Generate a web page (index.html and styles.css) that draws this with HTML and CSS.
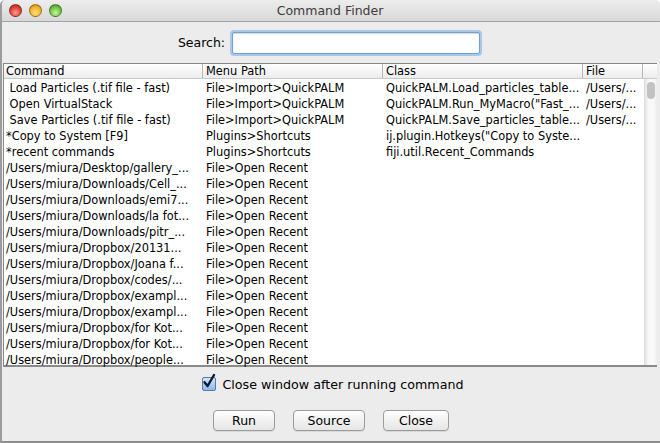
FILE: index.html
```html
<!DOCTYPE html>
<html>
<head>
<meta charset="utf-8">
<title>Command Finder</title>
<link rel="stylesheet" href="styles.css">
</head>
<body>
<div class="window">
  <div class="titlebar">
    <div class="lights">
      <span class="light red"></span>
      <span class="light yellow"></span>
      <span class="light green"></span>
    </div>
    <div class="title">Command Finder</div>
  </div>
  <div class="search-row">
    <span class="search-label">Search:</span>
    <div class="search-input"></div>
  </div>
  <div class="table">
    <div class="thead">
      <div class="th">Command</div>
      <div class="th">Menu Path</div>
      <div class="th">Class</div>
      <div class="th">File</div>
      <div class="th last"></div>
    </div>
    <div class="tbody">
      <div class="rows">
        <div class="row"><div class="td"> Load Particles (.tif file - fast)</div><div class="td">File&gt;Import&gt;QuickPALM</div><div class="td">QuickPALM.Load_particles_table...</div><div class="td">/Users/...</div></div>
        <div class="row"><div class="td"> Open VirtualStack</div><div class="td">File&gt;Import&gt;QuickPALM</div><div class="td">QuickPALM.Run_MyMacro("Fast_...</div><div class="td">/Users/...</div></div>
        <div class="row"><div class="td"> Save Particles (.tif file - fast)</div><div class="td">File&gt;Import&gt;QuickPALM</div><div class="td">QuickPALM.Save_particles_table...</div><div class="td">/Users/...</div></div>
        <div class="row"><div class="td">*Copy to System [F9]</div><div class="td">Plugins&gt;Shortcuts</div><div class="td">ij.plugin.Hotkeys("Copy to Syste...</div><div class="td"></div></div>
        <div class="row"><div class="td">*recent commands</div><div class="td">Plugins&gt;Shortcuts</div><div class="td">fiji.util.Recent_Commands</div><div class="td"></div></div>
        <div class="row"><div class="td">/Users/miura/Desktop/gallery_...</div><div class="td">File&gt;Open Recent</div><div class="td"></div><div class="td"></div></div>
        <div class="row"><div class="td">/Users/miura/Downloads/Cell_...</div><div class="td">File&gt;Open Recent</div><div class="td"></div><div class="td"></div></div>
        <div class="row"><div class="td">/Users/miura/Downloads/emi7...</div><div class="td">File&gt;Open Recent</div><div class="td"></div><div class="td"></div></div>
        <div class="row"><div class="td">/Users/miura/Downloads/la fot...</div><div class="td">File&gt;Open Recent</div><div class="td"></div><div class="td"></div></div>
        <div class="row"><div class="td">/Users/miura/Downloads/pitr_...</div><div class="td">File&gt;Open Recent</div><div class="td"></div><div class="td"></div></div>
        <div class="row"><div class="td">/Users/miura/Dropbox/20131...</div><div class="td">File&gt;Open Recent</div><div class="td"></div><div class="td"></div></div>
        <div class="row"><div class="td">/Users/miura/Dropbox/Joana f...</div><div class="td">File&gt;Open Recent</div><div class="td"></div><div class="td"></div></div>
        <div class="row"><div class="td">/Users/miura/Dropbox/codes/...</div><div class="td">File&gt;Open Recent</div><div class="td"></div><div class="td"></div></div>
        <div class="row"><div class="td">/Users/miura/Dropbox/exampl...</div><div class="td">File&gt;Open Recent</div><div class="td"></div><div class="td"></div></div>
        <div class="row"><div class="td">/Users/miura/Dropbox/exampl...</div><div class="td">File&gt;Open Recent</div><div class="td"></div><div class="td"></div></div>
        <div class="row"><div class="td">/Users/miura/Dropbox/for Kot...</div><div class="td">File&gt;Open Recent</div><div class="td"></div><div class="td"></div></div>
        <div class="row"><div class="td">/Users/miura/Dropbox/for Kot...</div><div class="td">File&gt;Open Recent</div><div class="td"></div><div class="td"></div></div>
        <div class="row"><div class="td">/Users/miura/Dropbox/people...</div><div class="td">File&gt;Open Recent</div><div class="td"></div><div class="td"></div></div>
      </div>
      <div class="scrollbar"><div class="thumb"></div></div>
    </div>
  </div>
  <div class="check-row">
    <span class="checkbox">
      <svg width="16" height="17" viewBox="0 0 16 17"><path d="M3.5 9.2 L6.6 13 L13 2" fill="none" stroke="#0d1a33" stroke-width="2.4" stroke-linecap="round" stroke-linejoin="round"/></svg>
    </span>
    <span class="check-label">Close window after running command</span>
  </div>
  <div class="buttons">
    <div class="btn btn-run">Run</div>
    <div class="btn btn-source">Source</div>
    <div class="btn btn-close">Close</div>
  </div>
</div>
</body>
</html>
```
FILE: styles.css
```css
* { box-sizing: border-box; }
html, body { margin: 0; padding: 0; background: #ffffff; }
body { width: 660px; height: 443px; overflow: hidden; font-family: "DejaVu Sans", sans-serif; color: #000; }

.window {
  width: 660px;
  height: 443px;
  background: #ececec;
  border-left: 2px solid #9c9c9c;
  border-bottom: 2px solid #8e8e8e;
  border-radius: 5px 5px 0 0;
  display: flex;
  flex-direction: column;
  overflow: hidden;
}

.titlebar {
  height: 22px;
  flex: none;
  background: linear-gradient(#ededed, #d8d8d8);
  border-bottom: 1px solid #a3a3a3;
  position: relative;
  display: flex;
  align-items: center;
  justify-content: center;
}
.lights { position: absolute; left: 7px; top: 4px; display: flex; gap: 7px; }
.light { width: 13px; height: 13px; border-radius: 50%; border: 1px solid rgba(0,0,0,0.35); }
.red { background: radial-gradient(circle at 50% 70%, #ff9a8e 0%, #e0443a 55%, #b31f17 100%); }
.yellow { background: radial-gradient(circle at 50% 70%, #ffe08a 0%, #f2b42a 55%, #c6800c 100%); }
.green { background: radial-gradient(circle at 50% 70%, #c8f59a 0%, #6fc548 55%, #3d9220 100%); }
.title { font-size: 12.5px; color: #3c3c3c; margin-left: -2px; }

.search-row {
  height: 41px;
  flex: none;
  display: flex;
  align-items: center;
  justify-content: center;
  gap: 7px;
  padding-right: 4px;
}
.search-label { font-size: 12.5px; }
.search-input {
  width: 248px;
  height: 22px;
  background: #fff;
  border: 1px solid #6f9fd6;
  border-radius: 2px;
  box-shadow: 0 0 0 2px #a9c7ea, inset 0 1px 1px rgba(0,0,0,0.15);
}

.table {
  flex: none;
  height: 304px;
  margin-left: 1px;
  margin-right: 3px;
  background: #fff;
  border-top: 1px solid #888;
  border-left: 1px solid #8a8a8a;
  border-bottom: 2px solid #8a8a8a;
  display: flex;
  flex-direction: column;
}
.thead {
  height: 15px;
  flex: none;
  display: grid;
  grid-template-columns: 199px 180px 200px 60px 1fr;
  background: linear-gradient(#ffffff, #ececec);
  border-bottom: 1px solid #c9c9c9;
  font-size: 11.4px;
  line-height: 14px;
}
.th { padding-left: 3px; border-right: 1px solid #b5b5b5; white-space: nowrap; overflow: hidden; }
.th:first-child { padding-left: 2px; }
.th.last { border-right: none; }

.tbody { flex: 1; display: flex; min-height: 0; }
.rows { width: 640px; padding-top: 1px; }
.row {
  height: 16px;
  display: grid;
  grid-template-columns: 199px 180px 200px 61px;
  font-size: 11.4px;
  line-height: 16px;
}
.td { padding-left: 3px; white-space: pre; overflow: hidden; }
.td:first-child { padding-left: 2px; }

.scrollbar {
  width: 13px;
  margin-left: auto;
  background: linear-gradient(to right, #e4e4e4, #f8f8f8 30%, #fafafa 70%, #eeeeee);
  border-left: 1px solid #dedede;
  padding-top: 3px;
  display: flex;
  justify-content: center;
}
.thumb { width: 8px; height: 17px; border-radius: 4px; background: #c2c2c2; }

.check-row {
  height: 34px;
  flex: none;
  display: flex;
  align-items: center;
  justify-content: center;
  gap: 6px;
  padding-left: 4px;
}
.checkbox {
  width: 14px; height: 14px;
  border: 1px solid #5a7aa8;
  border-radius: 2px;
  background: linear-gradient(#d3e5f9, #8fb8ea);
  display: inline-flex;
  overflow: visible;
}
.checkbox svg { margin: -5px 0 0 -2px; flex: none; }
.check-label { font-size: 12.7px; }

.buttons {
  flex: 1;
  display: flex;
  justify-content: center;
  align-items: flex-start;
  padding-top: 9px;
  gap: 18px;
}
.btn {
  height: 21px;
  border: 1px solid #9b9b9b;
  border-radius: 4px;
  background: linear-gradient(#ffffff, #f1f1f1 50%, #e6e6e6);
  box-shadow: 0 1px 0 rgba(0,0,0,0.08);
  font-size: 12.5px;
  line-height: 19px;
  text-align: center;
}
.btn-run { width: 62px; }
.btn-source { width: 72px; }
.btn-close { width: 66px; }
```
